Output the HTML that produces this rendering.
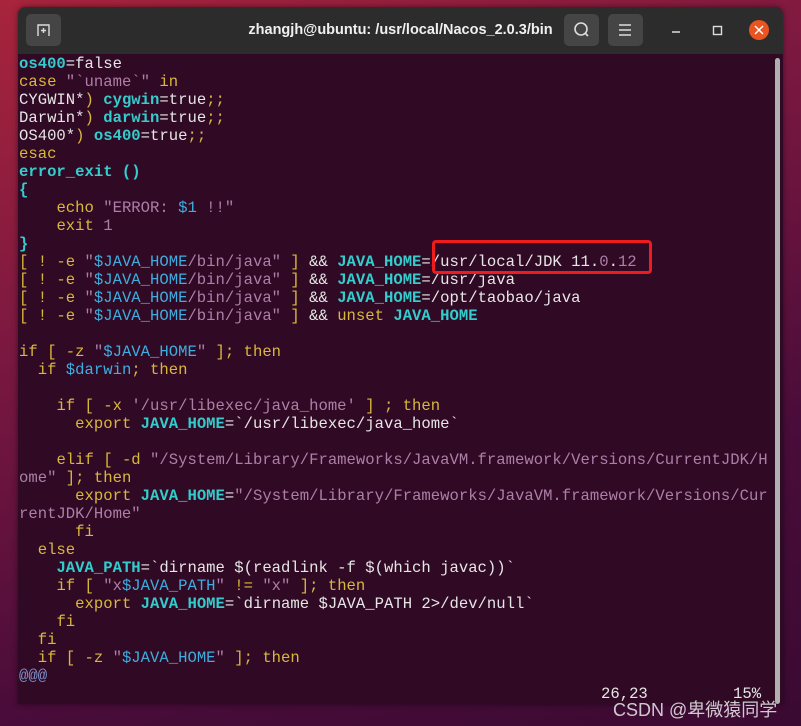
<!DOCTYPE html>
<html><head><meta charset="utf-8"><style>
html,body{margin:0;padding:0;width:801px;height:726px;overflow:hidden;}
body{background:linear-gradient(160deg,#a8243c 0%,#7a1840 35%,#4a0c3a 70%,#3a0a32 100%);position:relative;font-family:"Liberation Sans",sans-serif;}
.win{position:absolute;left:18px;top:7px;width:765px;height:697px;background:#300a24;border-radius:8px 8px 0 0;overflow:hidden;box-shadow:0 0 6px rgba(0,0,0,.5);}
.tb{position:absolute;left:0;top:0;width:765px;height:47px;background:#2c2c2c;}
.title{position:absolute;left:0;width:765px;top:15px;text-align:center;color:#f0f0f0;font-weight:bold;font-size:14.5px;padding-left:0;}
.btn{position:absolute;top:7px;width:35px;height:32px;background:#454545;border-radius:5px;}
.term{position:absolute;left:1px;top:48px;font-family:"Liberation Mono",monospace;font-size:15.6px;line-height:18px;color:#e6e6e6;white-space:pre;}
.c{color:#34cccc;font-weight:bold}.y{color:#d8b83c}.m{color:#ad7fa8}.b{color:#3eaee0}.g{color:#7f8fc8}
.sb{position:absolute;left:757px;top:51px;width:5px;height:646px;background:#b0b0b0;border-radius:3px;}
.box{position:absolute;left:432px;top:240px;width:214px;height:28px;border:3px solid #ee1c1c;border-radius:4px;}
</style></head><body>
<div class="win">
 <div class="tb">
  <div class="btn" style="left:8px;width:35px;"><svg width="35" height="32"><path d="M12 22 V11 H23 V22 M15 16.5 H20 M17.5 14 V19" stroke="#ddd" stroke-width="1.4" fill="none"/></svg></div>
  <div class="title">zhangjh@ubuntu: /usr/local/Nacos_2.0.3/bin</div>
  <div class="btn" style="left:546px;"><svg width="35" height="32"><circle cx="17" cy="15" r="6" stroke="#ddd" stroke-width="1.6" fill="none"/><path d="M21 19 L24 22" stroke="#ddd" stroke-width="1.6"/></svg></div>
  <div class="btn" style="left:590px;"><svg width="35" height="32"><path d="M11 11 H23 M11 16 H23 M11 21 H23" stroke="#ddd" stroke-width="1.4"/></svg></div>
  <svg style="position:absolute;left:640px;top:0" width="125" height="47"><path d="M14 25 H22" stroke="#ddd" stroke-width="1.4"/><rect x="55.5" y="19.5" width="8" height="8" stroke="#ddd" stroke-width="1.4" fill="none"/><circle cx="101" cy="23" r="10" fill="#e95420"/><path d="M97 19 L105 27 M105 19 L97 27" stroke="#fff" stroke-width="1.5"/></svg>
 </div>
 <div class="term"><span class="c">os400</span>=false
<span class="y">case</span> <span class="m">"`uname`"</span> <span class="y">in</span>
CYGWIN*<span class="y">)</span> <span class="c">cygwin</span>=true<span class="y">;;</span>
Darwin*<span class="y">)</span> <span class="c">darwin</span>=true<span class="y">;;</span>
OS400*<span class="y">)</span> <span class="c">os400</span>=true<span class="y">;;</span>
<span class="y">esac</span>
<span class="c">error_exit ()</span>
<span class="c">{</span>
    <span class="y">echo</span> <span class="m">"ERROR: </span><span class="b">$1</span><span class="m"> !!"</span>
    <span class="y">exit</span> <span class="m">1</span>
<span class="c">}</span>
<span class="y">[ ! -e</span> <span class="m">"</span><span class="b">$JAVA_HOME</span><span class="m">/bin/java"</span> <span class="y">]</span> &amp;&amp; <span class="c">JAVA_HOME</span>=/usr/local/JDK 11.<span class="m">0</span>.<span class="m">12</span>
<span class="y">[ ! -e</span> <span class="m">"</span><span class="b">$JAVA_HOME</span><span class="m">/bin/java"</span> <span class="y">]</span> &amp;&amp; <span class="c">JAVA_HOME</span>=/usr/java
<span class="y">[ ! -e</span> <span class="m">"</span><span class="b">$JAVA_HOME</span><span class="m">/bin/java"</span> <span class="y">]</span> &amp;&amp; <span class="c">JAVA_HOME</span>=/opt/taobao/java
<span class="y">[ ! -e</span> <span class="m">"</span><span class="b">$JAVA_HOME</span><span class="m">/bin/java"</span> <span class="y">]</span> &amp;&amp; <span class="y">unset</span> <span class="c">JAVA_HOME</span>

<span class="y">if [ -z</span> <span class="m">"</span><span class="b">$JAVA_HOME</span><span class="m">"</span> <span class="y">]; then</span>
  <span class="y">if</span> <span class="b">$darwin</span><span class="y">; then</span>

    <span class="y">if [ -x</span> <span class="m">'/usr/libexec/java_home'</span> <span class="y">] ; then</span>
      <span class="y">export</span> <span class="c">JAVA_HOME</span>=`/usr/libexec/java_home`

    <span class="y">elif [ -d</span> <span class="m">"/System/Library/Frameworks/JavaVM.framework/Versions/CurrentJDK/H</span>
<span class="m">ome"</span> <span class="y">]; then</span>
      <span class="y">export</span> <span class="c">JAVA_HOME</span>=<span class="m">"/System/Library/Frameworks/JavaVM.framework/Versions/Cur</span>
<span class="m">rentJDK/Home"</span>
      <span class="y">fi</span>
  <span class="y">else</span>
    <span class="c">JAVA_PATH</span>=`dirname $(readlink -f $(which javac))`
    <span class="y">if [</span> <span class="m">"x</span><span class="b">$JAVA_PATH</span><span class="m">"</span> <span class="y">!=</span> <span class="m">"x"</span> <span class="y">]; then</span>
      <span class="y">export</span> <span class="c">JAVA_HOME</span>=`dirname $JAVA_PATH 2&gt;/dev/null`
    <span class="y">fi</span>
  <span class="y">fi</span>
  <span class="y">if [ -z</span> <span class="m">"</span><span class="b">$JAVA_HOME</span><span class="m">"</span> <span class="y">]; then</span>
<span class="g">@@@</span>
</div>
 <div style="position:absolute;left:583px;top:678px;font-family:'Liberation Mono',monospace;font-size:15.6px;color:#e6e6e6;white-space:pre">26,23</div>
 <div style="position:absolute;left:715px;top:678px;font-family:'Liberation Mono',monospace;font-size:15.6px;color:#e6e6e6;white-space:pre">15%</div>
 <div class="sb"></div>
</div>
<div class="box"></div>
<div style="position:absolute;left:613px;top:696px;font-family:'Liberation Sans','Noto Sans CJK SC',sans-serif;font-size:18px;color:rgba(235,235,235,.85)">CSDN @卑微猿同学</div>
</body></html>
